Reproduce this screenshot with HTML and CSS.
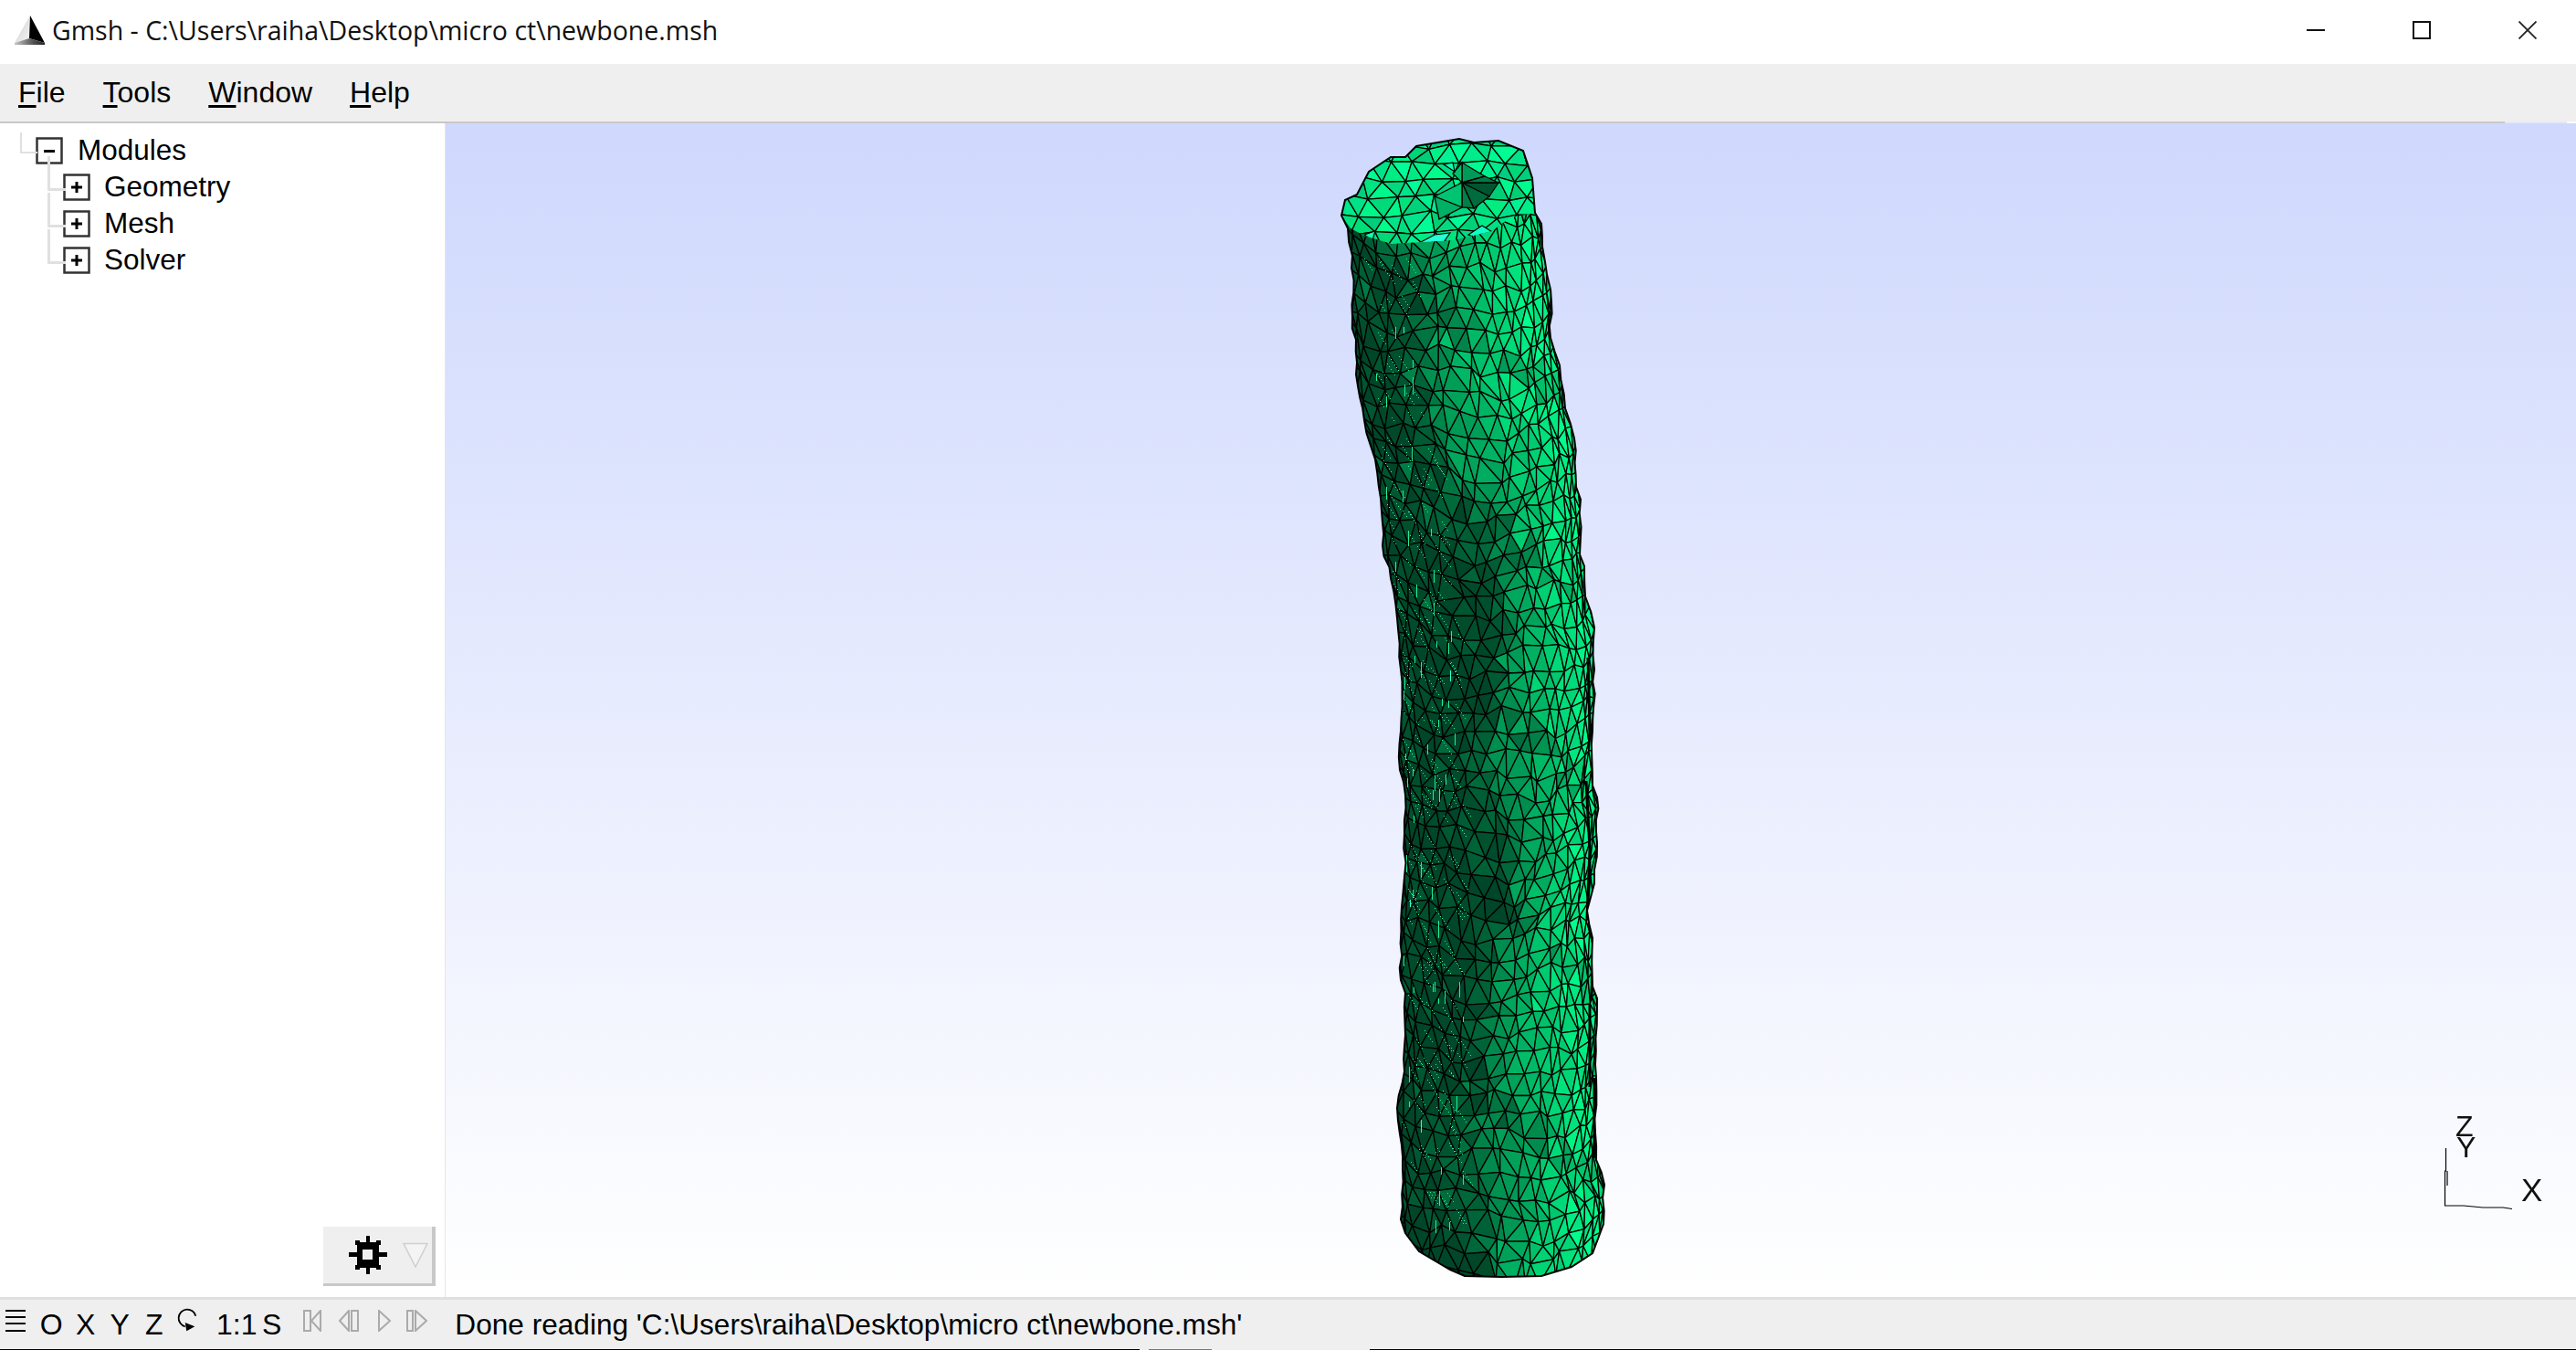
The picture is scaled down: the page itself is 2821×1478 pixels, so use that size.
FILE: index.html
```html
<!DOCTYPE html>
<html lang="en">
<head>
<meta charset="utf-8">
<title>Gmsh</title>
<link rel="stylesheet" href="styles.css">
</head>
<body>
<div class="app">
  <header class="titlebar">
    <svg class="logo" viewBox="0 0 36 36" width="36" height="36">
      <defs>
        <linearGradient id="lf" x1="0" y1="0" x2="1" y2="1"><stop offset="0" stop-color="#8a8a8a"/><stop offset="0.55" stop-color="#e4e4e4"/><stop offset="1" stop-color="#f4f4f4"/></linearGradient>
        <linearGradient id="bf" x1="0" y1="0" x2="1" y2="0"><stop offset="0" stop-color="#c8c8c8"/><stop offset="0.6" stop-color="#555"/><stop offset="1" stop-color="#222"/></linearGradient>
      </defs>
      <polygon points="18,1 1,31 17,26" fill="url(#lf)"/>
      <polygon points="18,1 17,26 34,31" fill="#000"/>
      <polygon points="1,31 17,26 34,31 34,33 1,33" fill="url(#bf)"/>
    </svg>
    <span class="title">Gmsh - C:\Users\raiha\Desktop\micro ct\newbone.msh</span>
    <div class="winctl">
      <svg viewBox="0 0 20 20" width="20" height="20"><rect x="0" y="9" width="20" height="2" fill="#111"/></svg>
      <svg viewBox="0 0 20 20" width="20" height="20"><rect x="1" y="1" width="18" height="18" fill="none" stroke="#111" stroke-width="2"/></svg>
      <svg viewBox="0 0 20 20" width="20" height="20"><path d="M0.5 0.5L19.5 19.5M19.5 0.5L0.5 19.5" stroke="#222" stroke-width="1.8" fill="none"/></svg>
    </div>
  </header>
  <nav class="menubar">
    <span class="menu m-file"><u>F</u>ile</span>
    <span class="menu m-tools"><u>T</u>ools</span>
    <span class="menu m-window"><u>W</u>indow</span>
    <span class="menu m-help"><u>H</u>elp</span>
  </nav>
  <div class="menuline"></div>
  <main class="main">
    <aside class="sidebar">
      <div class="tree">
        <div class="row row-root">
          <svg class="box" viewBox="0 0 30 30" width="30" height="30"><rect x="1.5" y="1.5" width="27" height="27" fill="#fff" stroke="#333" stroke-width="2.5"/><rect x="9" y="14" width="12" height="3" fill="#000"/></svg>
          <span class="label">Modules</span>
        </div>
        <div class="row row-child">
          <svg class="box" viewBox="0 0 30 30" width="30" height="30"><rect x="1.5" y="1.5" width="27" height="27" fill="#fff" stroke="#333" stroke-width="2.5"/><path d="M9 15H21M15 9V21" stroke="#000" stroke-width="3"/></svg>
          <span class="label">Geometry</span>
        </div>
        <div class="row row-child">
          <svg class="box" viewBox="0 0 30 30" width="30" height="30"><rect x="1.5" y="1.5" width="27" height="27" fill="#fff" stroke="#333" stroke-width="2.5"/><path d="M9 15H21M15 9V21" stroke="#000" stroke-width="3"/></svg>
          <span class="label">Mesh</span>
        </div>
        <div class="row row-child row-last">
          <svg class="box" viewBox="0 0 30 30" width="30" height="30"><rect x="1.5" y="1.5" width="27" height="27" fill="#fff" stroke="#333" stroke-width="2.5"/><path d="M9 15H21M15 9V21" stroke="#000" stroke-width="3"/></svg>
          <span class="label">Solver</span>
        </div>
      </div>
      <div class="runbtn">
        <svg class="gear" viewBox="0 0 42 42" width="42" height="42"><path fill-rule="evenodd" d="M19 0h4v7h7V5h5v5h-2v8h9v5h-9v9h2v5h-5v-2h-7v7h-4v-7h-7v2H7v-5h2v-9H0v-5h9v-8H7V5h5v2h7zM15 15v11h11V15z" fill="#000"/></svg>
        <svg class="arrow" viewBox="0 0 28 28" width="28" height="28"><path d="M1 1.5H27L14 27Z" fill="#f4f4f4" stroke="#cfcfcf" stroke-width="1.5"/></svg>
      </div>
    </aside>
    <section class="viewport">
      <canvas id="mesh" class="mesh" width="2334" height="1285"></canvas>
      <div class="axes">
        <svg class="axes-lines" viewBox="0 0 201 160" width="201" height="160">
          <path d="M58.5 67V92L57.5 92V130M60 92V108M57 130H78L99 132H121L131 133.500" fill="none" stroke="#000" stroke-width="1.2"/>
        </svg>
        <span class="ax ax-z">Z</span>
        <span class="ax ax-y">Y</span>
        <span class="ax ax-x">X</span>
      </div>
    </section>
  </main>
  <footer class="status">
    <svg class="sicon burger" viewBox="0 0 22 24" width="22" height="24"><path d="M0 1H22M0 8H22M0 15H22M0 23H22" stroke="#000" stroke-width="2"/></svg>
    <span class="sbtn sfirst">O</span>
    <span class="sbtn">X</span>
    <span class="sbtn">Y</span>
    <span class="sbtn">Z</span>
    <span class="sbtn"><svg viewBox="0 0 24 28" width="24" height="28"><path d="M20.300 9.700A9.500 9.500 0 1 0 8.700 21.300" fill="none" stroke="#000" stroke-width="1.8"/><path d="M8.700 17L19.300 21.300L10.300 26.300Z" fill="#000"/></svg></span>
    <span class="s-ratio">1:1</span>
    <span class="s-s">S</span>
    <svg class="nav nav1" viewBox="0 0 20 24" width="20" height="24"><path d="M1 1H8V23H1ZM19 1L9 12L19 23Z" fill="none" stroke="#aaa" stroke-width="2"/></svg>
    <svg class="nav nav2" viewBox="0 0 22 24" width="22" height="24"><path d="M1 12L11 1V23ZM14 1H21V23H14Z" fill="none" stroke="#aaa" stroke-width="2"/></svg>
    <svg class="nav nav3" viewBox="0 0 16 24" width="16" height="24"><path d="M1 1L13 12L1 23Z" fill="none" stroke="#aaa" stroke-width="2"/></svg>
    <svg class="nav nav4" viewBox="0 0 23 24" width="23" height="24"><path d="M1 1H7V23H1ZM10 1L22 12L10 23Z" fill="none" stroke="#aaa" stroke-width="2"/></svg>
    <span class="message">Done reading 'C:\Users\raiha\Desktop\micro ct\newbone.msh'</span>
  </footer>
  <div class="baseline"></div>
</div>
<script src="mesh.js"></script>
</body>
</html>
```
FILE: styles.css
```css
* { box-sizing: border-box; }
html, body { margin: 0; padding: 0; height: 100%; overflow: hidden; background: #fff; }
body { font-family: "Liberation Sans", Arial, sans-serif; color: #000; }
.app { display: flex; flex-direction: column; width: 2821px; height: 1478px; }

.titlebar { flex: 0 0 70px; display: flex; align-items: center; background: #fff; padding-left: 15px; }
.logo { margin-top: -2px; }
.title { margin-left: 6px; margin-top: -4px; font-family: "Open Sans", "Noto Sans", sans-serif; font-size: 28.5px; color: #111; white-space: nowrap; }
.winctl { margin-left: auto; margin-top: -5px; display: flex; gap: 96px; padding-right: 43px; }

.menubar { flex: 0 0 63px; display: flex; align-items: center; background: #efefef; font-size: 32px; padding-left: 20px; padding-bottom: 1px; }
.menu u { text-decoration-thickness: 3px; text-underline-offset: 3px; }
.m-tools { margin-left: 41px; }
.m-window { margin-left: 41px; }
.m-help { margin-left: 41px; }
.menuline { flex: 0 0 2px; background: linear-gradient(to right, #c8c8c8 2743px, #e3e7fb 2743px, #e3e7fb 2811px, #fff 2811px); }

.main { flex: 1 1 auto; display: flex; min-height: 0; }
.sidebar { flex: 0 0 488px; display: flex; flex-direction: column; background: #fff; border-right: 1px solid #e6e6e6; padding: 10px 10px 12px 0; }
.tree { display: flex; flex-direction: column; font-size: 31.5px; }
.row { position: relative; display: flex; align-items: center; height: 40px; }
.row-root { padding-left: 39px; }
.row-child { padding-left: 69px; }
.label { margin-left: 16px; margin-top: -2px; line-height: 40px; }
.row-child .label { margin-left: 15px; }
.box { flex: none; }
.row-root::before { content: ""; position: absolute; left: 22px; top: 0; width: 17px; height: 21px; border-left: 2px solid #e0e0e0; border-bottom: 2px solid #e0e0e0; }
.row-child::before { content: ""; position: absolute; left: 52px; top: -14px; width: 17px; height: 35px; border-left: 3px solid #e0e0e0; border-bottom: 3px solid #e0e0e0; }
.runbtn { margin-top: auto; align-self: flex-end; display: flex; align-items: center; width: 123px; height: 65px; background: #efefef; border-right: 4px solid #c8c8c8; border-bottom: 3px solid #c8c8c8; padding-left: 28px; }
.arrow { margin-left: 17px; }

.viewport { position: relative; flex: 1 1 auto; min-width: 0; background: linear-gradient(to bottom, #cfd8fd 0, #ffffff 100%); }
.mesh { display: block; }
.axes { position: absolute; right: 0; bottom: 70px; width: 201px; height: 160px; }
.axes-lines { display: block; }
.ax { position: absolute; font-size: 32px; line-height: 32px; color: #111; }
.ax-z { left: 69px; top: 27px; }
.ax-y { left: 70px; top: 50px; }
.ax-x { left: 141px; top: 97px; font-size: 35px; }

.status { flex: 0 0 57px; display: flex; align-items: center; background: #efefef; border-top: 3px solid #e0e0e0; font-size: 32px; padding-left: 6px; }
.burger { flex: none; margin-top: -8px; }
.sbtn { flex: 0 0 37.5px; display: flex; justify-content: center; align-items: center; }
.sbtn svg { margin-top: -10px; }
.sfirst { margin-left: 9.5px; }
.s-ratio { flex: 0 0 50px; margin-left: 12px; }
.s-s { flex: none; }
.nav { flex: none; margin-top: -8px; }
.nav1 { margin-left: 24px; }
.nav2 { margin-left: 19px; }
.nav3 { margin-left: 21px; }
.nav4 { margin-left: 15px; }
.message { margin-left: 30px; font-size: 31.6px; white-space: nowrap; }
.baseline { flex: 0 0 1px; background: linear-gradient(to right, #000 1248px, #efefef 1248px, #efefef 1258px, #777 1258px, #777 1327px, #efefef 1327px, #efefef 1500px, #000 1500px); }
```
FILE: mesh.js
```js
(function () {
  var canvas = document.getElementById('mesh');
  var ctx = canvas.getContext('2d');
  ctx.translate(-487, -135);

  var seed = 20241;
  function rnd() {
    seed = (seed * 1664525 + 1013904223) >>> 0;
    return seed / 4294967296;
  }

  var LEFT = [[1468,236],[1475,250],[1480,280],[1480,347],[1485,397],[1484,410],[1493,460],[1505,503],[1512,560],[1513,597],[1522,633],[1529,677],[1533,733],[1533,800],[1532,843],[1538,870],[1537,913],[1537,960],[1534,993],[1533,1073],[1538,1087],[1538,1133],[1537,1173],[1529,1213],[1535,1280],[1533,1335]];
  var RIGHT = [[1680,233],[1687,245],[1688,270],[1697,317],[1697,370],[1707,400],[1713,447],[1723,480],[1725,533],[1730,547],[1729,607],[1734,620],[1735,653],[1745,687],[1745,733],[1743,800],[1743,860],[1748,873],[1748,923],[1745,967],[1737,997],[1743,1027],[1743,1080],[1748,1093],[1747,1180],[1747,1270],[1756,1297],[1755,1340]];
  var TOP = [[1468,236],[1472,219],[1485,213],[1498,188],[1522,172],[1538,172],[1550,160],[1597,152],[1613,156],[1640,154],[1667,165],[1677,195],[1680,233]];
  var BOTTOM = [[1755,1340],[1743,1372],[1720,1387],[1687,1397],[1643,1398],[1603,1397],[1587,1390],[1553,1370],[1538,1350],[1533,1335]];
  var LIP = [[1468,236],[1478,250],[1493,258],[1523,267],[1555,265],[1590,263],[1633,253],[1653,238],[1680,233]];

  function interp(pts, y) {
    if (y <= pts[0][1]) return pts[0][0];
    for (var i = 1; i < pts.length; i++) {
      if (y <= pts[i][1]) {
        var a = pts[i - 1], b = pts[i];
        return a[0] + (b[0] - a[0]) * (y - a[1]) / (b[1] - a[1]);
      }
    }
    return pts[pts.length - 1][0];
  }
  function polyPath(pts) {
    ctx.beginPath();
    pts.forEach(function (p, i) { if (i) ctx.lineTo(p[0], p[1]); else ctx.moveTo(p[0], p[1]); });
    ctx.closePath();
  }
  // Break long silhouette edges into small irregular steps
  function rough(pts) {
    var out = [pts[0]];
    for (var i = 1; i < pts.length; i++) {
      var a = pts[i - 1], b = pts[i];
      var n = Math.max(1, Math.round(Math.abs(b[1] - a[1]) / 14));
      for (var k = 1; k <= n; k++) {
        var f = k / n;
        out.push(k === n ? b : [a[0] + (b[0] - a[0]) * f + (rnd() - 0.5) * 3.2, a[1] + (b[1] - a[1]) * f]);
      }
    }
    return out;
  }
  var ROUGH_L = rough(LEFT), ROUGH_R = rough(RIGHT);
  function outlinePath() {
    polyPath(TOP.concat(ROUGH_R.slice(1), BOTTOM.slice(1), ROUGH_L.slice().reverse().slice(1)));
  }
  function band(y) {
    var pts = [[200,0.20],[300,0.24],[450,0.36],[700,0.54],[1000,0.50],[1200,0.44],[1400,0.32]];
    if (y <= 200) return 0.20;
    for (var i = 1; i < pts.length; i++) {
      if (y <= pts[i][0]) {
        var a = pts[i - 1], b = pts[i];
        return a[1] + (b[1] - a[1]) * (y - a[0]) / (b[0] - a[0]);
      }
    }
    return 0.32;
  }
  function shade(t, y, k) {
    var e = band(y) + 0.07 * Math.sin(y / 55 + t * 5);
    var s = (t - e) / (1 - e);
    var l;
    if (s < 0) l = 0.01 + 0.13 * Math.max(0, 1 + s * 2);
    else l = 0.30 + 0.70 * Math.pow(s, 0.95);
    l = Math.max(0, Math.min(1, l + k));
    return 'rgb(0,' + Math.round(70 + 185 * l) + ',' + Math.round(40 + 100 * l) + ')';
  }
  function tri(a, b, c, fill, w) {
    ctx.beginPath();
    ctx.moveTo(a[0], a[1]); ctx.lineTo(b[0], b[1]); ctx.lineTo(c[0], c[1]); ctx.closePath();
    ctx.fillStyle = fill; ctx.fill();
    ctx.strokeStyle = '#000'; ctx.lineWidth = w || 1.3; ctx.stroke();
  }

  // Body of the tube
  ctx.save();
  outlinePath();
  ctx.clip();
  var N = 18, H = 22;
  var grid = [];
  var j = 0;
  for (var y0 = 90; y0 < 1470; y0 += H, j++) {
    var row = [];
    var yy = Math.min(Math.max(y0, 240), 1340);
    var L = interp(LEFT, yy), R = interp(RIGHT, yy);
    var cx = (L + R) / 2, rad = (R - L) / 2 + 3;
    for (var i = 0; i <= N; i++) {
      var u = Math.min(1, (i + (j % 2) * 0.5) / N);
      var th = -Math.PI / 2 + Math.PI * Math.pow(u, 0.8);
      var jit = Math.cos(th);
      row.push([
        cx + rad * Math.sin(th) + (rnd() - 0.5) * 12 * jit,
        y0 + 34 * jit + 7 * Math.sin(th * 4 + y0 / 70) * jit + (rnd() - 0.5) * 10
      ]);
    }
    grid.push(row);
  }
  function facet(a, b, c) {
    var mx = (a[0] + b[0] + c[0]) / 3, my = (a[1] + b[1] + c[1]) / 3;
    var l = interp(LEFT, my), r = interp(RIGHT, my);
    var t = (mx - l) / (r - l);
    var k = (rnd() - 0.5) * 0.16;
    if (Math.sin(my / 34 - t * 5) > 0.82 && rnd() < 0.7) k -= 0.24;
    if (rnd() < 0.05) k += 0.16;
    tri(a, b, c, shade(t, my, k));
  }
  for (j = 0; j < grid.length - 1; j++) {
    for (var q = 0; q < N; q++) {
      var a = grid[j][q], b = grid[j][q + 1], c = grid[j + 1][q], d = grid[j + 1][q + 1];
      if (j % 2) { facet(a, c, d); facet(a, b, d); }
      else { facet(a, b, c); facet(b, d, c); }
    }
  }
  // Bright specks on the steep left side
  for (var s = 0; s < 300; s++) {
    var sy = 280 + rnd() * 1060;
    var sl = interp(LEFT, sy), sr = interp(RIGHT, sy);
    var sx = sl + 2 + rnd() * (sr - sl) * 0.3;
    var len = 4 + Math.floor(rnd() * 9);
    var vertical = rnd() < 0.2;
    ctx.fillStyle = rnd() < 0.15 ? '#30ffd0' : '#20f098';
    for (var n = 0; n < len; n++) {
      if (vertical) ctx.fillRect(Math.round(sx), Math.round(sy + n * 1.5), 1, 2);
      else if (n % 2 === 0) ctx.fillRect(Math.round(sx + n), Math.round(sy + n * 1.5), 1, 1);
    }
  }
  // Heavy seams where facets bunch up along the right edge
  ctx.strokeStyle = '#000';
  ctx.lineWidth = 3;
  [[[1736,855],[1740,930],[1737,1005]], [[1740,1100],[1740,1190]], [[1745,1180],[1745,1268]], [[1738,720],[1740,800]]].forEach(function (seg) {
    ctx.beginPath();
    seg.forEach(function (p, i) { if (i) ctx.lineTo(p[0], p[1]); else ctx.moveTo(p[0], p[1]); });
    ctx.stroke();
  });
  ctx.restore();

  // Cut end of the tube
  ctx.save();
  polyPath(TOP.concat(LIP.slice().reverse().slice(1, -1)));
  ctx.clip();
  var cg = [];
  for (var cj = 0; cj < 8; cj++) {
    var cr = [];
    for (var ci = 0; ci < 11; ci++) {
      cr.push([1450 + ci * 25 + (cj % 2) * 12.5 + (rnd() - 0.5) * 11, 140 + cj * 19 + (rnd() - 0.5) * 9]);
    }
    cg.push(cr);
  }
  function capFill() {
    var gr = 205 + Math.floor(rnd() * 50);
    return 'rgb(0,' + gr + ',' + Math.floor(gr * 0.54 + rnd() * 18) + ')';
  }
  for (cj = 0; cj < cg.length - 1; cj++) {
    for (ci = 0; ci < 10; ci++) {
      var e = cg[cj][ci], f = cg[cj][ci + 1], g = cg[cj + 1][ci], h = cg[cj + 1][ci + 1];
      if (cj % 2) { tri(e, g, h, capFill()); tri(e, f, h, capFill()); }
      else { tri(e, f, g, capFill()); tri(f, h, g, capFill()); }
    }
  }
  // Bore of the tube
  tri([1600, 178], [1625, 193], [1600, 200], '#009a58');
  tri([1590, 190], [1600, 178], [1600, 200], '#00c06c');
  tri([1600, 200], [1640, 200], [1630, 215], '#00552f');
  tri([1600, 200], [1630, 215], [1613, 228], '#006b3d');
  tri([1600, 200], [1613, 228], [1600, 227], '#007f47');
  tri([1625, 193], [1640, 200], [1600, 200], '#007a44');
  tri([1570, 215], [1600, 200], [1600, 227], '#00c471');
  tri([1570, 215], [1600, 227], [1575, 240], '#00b064');
  function glare(pts, col) {
    polyPath(pts); ctx.fillStyle = col; ctx.fill();
    ctx.strokeStyle = '#000'; ctx.lineWidth = 1.2; ctx.stroke();
  }
  glare([[1555,265],[1570,257],[1587,255],[1580,265],[1570,268]], '#24ffd8');
  glare([[1607,257],[1622,247],[1635,255],[1617,261]], '#10ffc8');
  glare([[1580,180],[1590,178],[1592,188]], '#12ffb8');
  glare([[1493,257],[1505,253],[1502,263]], '#10ffb0');
  ctx.restore();

  // Silhouette
  outlinePath();
  ctx.strokeStyle = '#000';
  ctx.lineWidth = 2;
  ctx.stroke();
})();
```
